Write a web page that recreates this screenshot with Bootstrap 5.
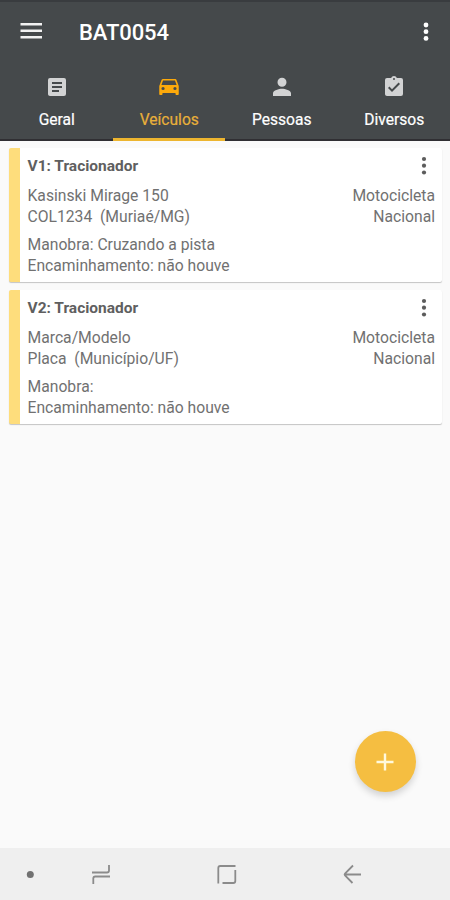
<!DOCTYPE html>
<html lang="pt-BR">
<head>
<meta charset="utf-8">
<meta name="viewport" content="width=device-width, initial-scale=1">
<title>BAT0054</title>
<link href="https://cdn.jsdelivr.net/npm/bootstrap@5.3.0/dist/css/bootstrap.min.css" rel="stylesheet">
<style>
body{font-family:Roboto,"Liberation Sans",sans-serif;background:#fafafa;color:#717171;overflow:hidden}
svg{display:block;flex:none}
.app-head{background:#45494b;border-top:2px solid #393c3f;height:141px}
.app-bar{height:60px;padding:0 12px 0 17px}
.app-name{font-size:22px;font-weight:500;line-height:28px;color:#fff;margin:2px 0 0 34px;letter-spacing:-.1px}
.tab-row{height:79px}
.tab-row .nav-link{color:#fff;font-size:15.6px;font-weight:400;line-height:22px;padding:13px 0 0 1px;border-bottom:2px solid #302f33;border-radius:0;gap:10px;-webkit-text-stroke:.2px}
.tab-row .nav-link svg{fill:#d2d3d4}
.tab-row .nav-link.active{color:#e9b03a;border-bottom:3px solid #edb52f}
.tab-row .nav-link.active svg{fill:#fca90b}
.vehicles{padding:7px 8px 0 9px;gap:8px}
.vehicle{border:0;border-left:11px solid #fedd7c;border-radius:2px;height:134px;padding:8px 7px 0 7.5px;font-size:15.7px;line-height:21px;box-shadow:0 1px 1px rgba(0,0,0,.22);gap:7.5px}
.vehicle-name{font-size:15.5px;font-weight:700;line-height:21px;color:#5f5f5f}
.add-btn{width:61px;height:61px;background:#f5be41;margin:0 34.5px 56px auto;box-shadow:0 4px 7px rgba(0,0,0,.16)}
.add-btn:hover{background:#f5be41}
.sys-bar{height:52px;background:#efefef;fill:none;stroke:#8b8b8b;stroke-width:1.8}
</style>
<script src="https://cdn.jsdelivr.net/npm/bootstrap@5.3.0/dist/js/bootstrap.bundle.min.js"></script>
</head>
<body class="d-flex flex-column vh-100">
<header class="app-head">
  <div class="app-bar d-flex align-items-center">
    <svg width="28" height="20" viewBox="0 0 28 20" stroke="#f2f2f2" stroke-width="2.4"><path d="M3.5 2.300h21.500M3.500 8.800h21.500M3.500 15.300h21.500"/></svg>
    <h1 class="app-name">BAT0054</h1>
    <svg class="ms-auto" width="24" height="24" viewBox="0 0 24 24" fill="#fff"><circle cx="12" cy="5" r="2.4"/><circle cx="12" cy="11.700" r="2.4"/><circle cx="12" cy="18.400" r="2.4"/></svg>
  </div>
  <nav class="tab-row nav nav-fill flex-nowrap">
    <a class="nav-link w-25 d-flex flex-column align-items-center" href="#"><svg width="24" height="24" viewBox="0 0 24 24"><path d="M19 3H5a2 2 0 0 0-2 2v14c0 1.100.9 2 2 2h14a2 2 0 0 0 2-2V5a2 2 0 0 0-2-2zm-5 14H7v-2h7v2zm3-4H7v-2h10v2zm0-4H7V7h10v2z"/></svg>Geral</a>
    <a class="nav-link active w-25 d-flex flex-column align-items-center" href="#"><svg width="26" height="24" viewBox="0 0 24 24" preserveAspectRatio="none"><path d="M18.920 5.010C18.720 4.420 18.160 4 17.500 4h-11c-.66 0-1.210.42-1.420 1.010L3 11v8c0 .55.45 1 1 1h1c.55 0 1-.45 1-1v-1h12v1c0 .55.45 1 1 1h1c.55 0 1-.45 1-1v-8l-2.080-5.990zM6.500 15a1.500 1.500 0 1 1 0-3 1.500 1.500 0 0 1 0 3zm11 0a1.500 1.500 0 1 1 0-3 1.500 1.500 0 0 1 0 3zM5 10l1.500-4.500h11L19 10H5z"/></svg>Veículos</a>
    <a class="nav-link w-25 d-flex flex-column align-items-center" href="#"><svg width="24" height="24" viewBox="0 0 24 24"><path d="M12 11.700a4.500 4.500 0 1 0 0-9 4.500 4.500 0 0 0 0 9zm0 2c-3 0-9 1.500-9 4.500V21h18v-2.800c0-3-6-4.500-9-4.500z"/></svg>Pessoas</a>
    <a class="nav-link w-25 d-flex flex-column align-items-center" href="#"><svg width="24" height="24" viewBox="0 0 24 24"><path d="M19 3h-4.180C14.400 1.840 13.300 1 12 1S9.600 1.840 9.180 3H5a2 2 0 0 0-2 2v14c0 1.100.9 2 2 2h14a2 2 0 0 0 2-2V5a2 2 0 0 0-2-2zm-7 0a1 1 0 1 1 0 2 1 1 0 0 1 0-2zm-2 14-4-4 1.410-1.410L10 14.170l6.590-6.590L18 9l-8 8z"/></svg>Diversos</a>
  </nav>
</header>
<main class="vehicles d-flex flex-column">
  <article class="vehicle card">
    <div class="d-flex justify-content-between"><h2 class="vehicle-name mb-0">V1: Tracionador</h2>
      <svg width="21" height="21" viewBox="0 0 21 21" fill="#5c5c5c"><circle cx="10" cy="3" r="2.100"/><circle cx="10" cy="9.700" r="2.100"/><circle cx="10" cy="16.500" r="2.100"/></svg></div>
    <div class="d-flex justify-content-between"><div>Kasinski Mirage 150<br>COL1234&nbsp; (Muriaé/MG)</div><div class="text-end">Motocicleta<br>Nacional</div></div>
    <div>Manobra: Cruzando a pista<br>Encaminhamento: não houve</div>
  </article>
  <article class="vehicle card">
    <div class="d-flex justify-content-between"><h2 class="vehicle-name mb-0">V2: Tracionador</h2>
      <svg width="21" height="21" viewBox="0 0 21 21" fill="#5c5c5c"><circle cx="10" cy="3" r="2.100"/><circle cx="10" cy="9.700" r="2.100"/><circle cx="10" cy="16.500" r="2.100"/></svg></div>
    <div class="d-flex justify-content-between"><div>Marca/Modelo<br>Placa&nbsp; (Município/UF)</div><div class="text-end">Motocicleta<br>Nacional</div></div>
    <div>Manobra:<br>Encaminhamento: não houve</div>
  </article>
</main>
<button type="button" class="add-btn btn rounded-circle border-0 p-0 mt-auto d-flex align-items-center justify-content-center" aria-label="Adicionar">
  <svg width="24" height="24" viewBox="0 0 24 24" stroke="#fff9dc" stroke-width="2.400"><path d="M12 3.500v17M3.500 12h17"/></svg>
</button>
<footer class="sys-bar">
  <svg width="450" height="52" viewBox="0 0 450 52"><circle cx="30.300" cy="26.500" r="3.500" fill="#717171" stroke="none"/><path d="M109 17v5.500q0 2-2 2H92M93.300 36v-5.500q0-2 2-2H110"/><path d="M218.300 35.500V20q0-2 2-2H235.500M235.300 22V33q0 2-2 2H222.500"/><path d="M361 26.500H345.500M353 17.500l-8 8q-.8 1 0 2l7.500 7.500"/></svg>
</footer>
</body>
</html>
